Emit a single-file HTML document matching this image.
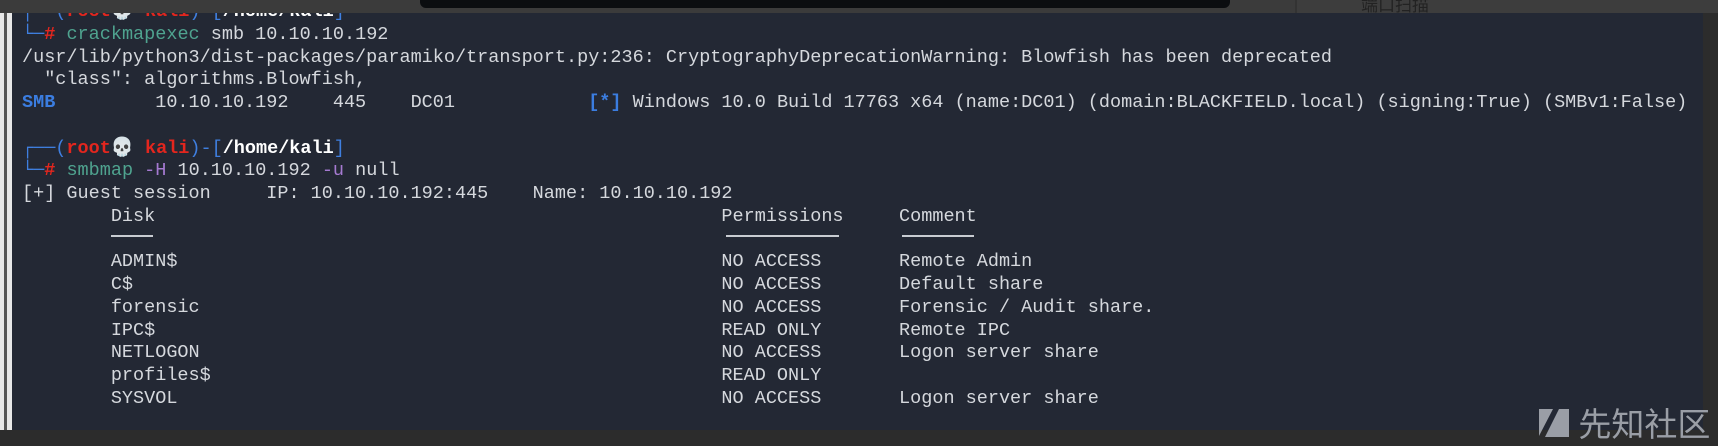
<!DOCTYPE html>
<html><head><meta charset="utf-8"><style>
html,body{margin:0;padding:0;width:1718px;height:437px;overflow:hidden;background:#2c2c2c;}
.top{position:absolute;left:0;top:0;width:1718px;height:13px;background:#3b3b3b;}
.blk{position:absolute;left:420px;top:0;width:810px;height:8px;background:#0b0d10;border-radius:0 0 6px 6px;}
.rt{position:absolute;left:1295px;top:0;width:423px;height:13px;background:#3d3d3d;border-left:2px solid #333;}
.rt span{position:absolute;left:64px;top:-9px;font:17px "Noto Sans CJK SC",sans-serif;color:#222;}
.lw{position:absolute;left:0;top:13px;width:12px;height:417px;background:#e8e8e8;}
.lw2{position:absolute;left:4px;top:13px;width:3px;height:417px;background:#555;}
.term{position:absolute;left:12px;top:13px;width:1691px;height:417px;background:#232834;overflow:hidden;}
pre{position:absolute;left:10px;top:-12px;margin:0;font:18.5px/22.75px "Liberation Mono","DejaVu Sans Mono",monospace;color:#d5d8dd;}
.b{color:#3f7fe0}.r{color:#e3261e;font-weight:bold}.w{color:#fff;font-weight:bold}
.g{color:#4fa38f}.p{color:#a57ad1}.s{color:#3b7de0;font-weight:bold}
.ul{position:absolute;height:2px;background:#c8ccd2;top:222px}
.wm{position:absolute;left:1537px;top:398px;font:33px "Noto Sans CJK SC",sans-serif;color:#9a9ea6;}
</style></head><body>
<div class="top"></div><div class="blk"></div><div class="rt"><span>端口扫描</span></div>
<div class="term">
<pre><span class="b">┌──(</span><span class="r">root💀 kali</span><span class="b">)-[</span><span class="w">/home/kali</span><span class="b">]</span>
<span class="b">└─</span><span class="r">#</span> <span class="g">crackmapexec</span> smb 10.10.10.192
/usr/lib/python3/dist-packages/paramiko/transport.py:236: CryptographyDeprecationWarning: Blowfish has been deprecated
  "class": algorithms.Blowfish,
<span class="s">SMB</span>         10.10.10.192    445    DC01            <span class="s">[*]</span> Windows 10.0 Build 17763 x64 (name:DC01) (domain:BLACKFIELD.local) (signing:True) (SMBv1:False)

<span class="b">┌──(</span><span class="r">root💀 kali</span><span class="b">)-[</span><span class="w">/home/kali</span><span class="b">]</span>
<span class="b">└─</span><span class="r">#</span> <span class="g">smbmap</span> <span class="p">-H</span> 10.10.10.192 <span class="p">-u</span> null
[+] Guest session     IP: 10.10.10.192:445    Name: 10.10.10.192
        Disk                                                   Permissions     Comment

        ADMIN$                                                 NO ACCESS       Remote Admin
        C$                                                     NO ACCESS       Default share
        forensic                                               NO ACCESS       Forensic / Audit share.
        IPC$                                                   READ ONLY       Remote IPC
        NETLOGON                                               NO ACCESS       Logon server share
        profiles$                                              READ ONLY
        SYSVOL                                                 NO ACCESS       Logon server share</pre>
<div class="ul" style="left:99px;width:42px"></div>
<div class="ul" style="left:714px;width:113px"></div>
<div class="ul" style="left:890px;width:72px"></div>
</div>
<div class="lw"></div><div class="lw2"></div>
<div class="wm"><svg width="34" height="34" viewBox="0 0 34 34" style="vertical-align:-4px"><path d="M2 3h14L2 30z M22 3h10v28H8z" fill="#9a9ea6"/></svg> 先知社区</div>
</body></html>
